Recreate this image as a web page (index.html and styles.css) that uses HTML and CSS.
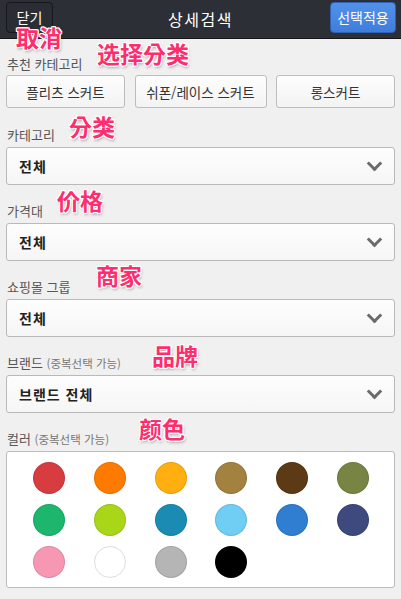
FILE: index.html
```html
<!DOCTYPE html>
<html lang="ko">
<head>
  <meta charset="UTF-8">
  <title>상세검색</title>
  <link rel="stylesheet" href="styles.css">
</head>
<body>

  <header class="topbar">
    <button class="btn-close">닫기</button>
    <h1>상세검색</h1>
    <button class="btn-apply">선택적용</button>
  </header>

  <main class="filters">
    <div class="label first">추천 카테고리</div>
    <div class="quick">
      <button>플리츠 스커트</button>
      <button>쉬폰/레이스 스커트</button>
      <button>롱스커트</button>
    </div>

    <div class="label">카테고리</div>
    <div class="select">전체<span class="chev"></span></div>

    <div class="label">가격대</div>
    <div class="select">전체<span class="chev"></span></div>

    <div class="label">쇼핑몰 그룹</div>
    <div class="select">전체<span class="chev"></span></div>

    <div class="label">브랜드 <small>(중복선택 가능)</small></div>
    <div class="select">브랜드 전체<span class="chev"></span></div>

    <div class="label">컬러 <small>(중복선택 가능)</small></div>
    <div class="colors">
      <span class="dot" style="background:#d63c40"></span>
      <span class="dot" style="background:#ff7b00"></span>
      <span class="dot" style="background:#ffb010"></span>
      <span class="dot" style="background:#a38240"></span>
      <span class="dot" style="background:#5b3a15"></span>
      <span class="dot" style="background:#788443"></span>
      <span class="dot" style="background:#1db66d"></span>
      <span class="dot" style="background:#a9d619"></span>
      <span class="dot" style="background:#1a8cb4"></span>
      <span class="dot" style="background:#70cdf3"></span>
      <span class="dot" style="background:#2f7ed1"></span>
      <span class="dot" style="background:#3e4a7e"></span>
      <span class="dot" style="background:#f797b3"></span>
      <span class="dot white" style="background:#fff"></span>
      <span class="dot" style="background:#b5b5b5"></span>
      <span class="dot" style="background:#000"></span>
    </div>
  </main>

  <!-- 주석 라벨 -->
  <span class="note" style="left:16px;top:25px">取消</span>
  <span class="note" style="left:97px;top:41px">选择分类</span>
  <span class="note" style="left:69px;top:114px">分类</span>
  <span class="note" style="left:57px;top:188px">价格</span>
  <span class="note" style="left:96px;top:263px">商家</span>
  <span class="note" style="left:152px;top:343px">品牌</span>
  <span class="note" style="left:139px;top:416px">颜色</span>

</body>
</html>
```

FILE: styles.css
```css
body {
  margin: 0;
  width: 401px;
  height: 599px;
  background: #f0f0f0;
  font-family: "Noto Sans CJK KR", "Noto Sans", sans-serif;
  position: relative;
  overflow: hidden;
}

.topbar {
  height: 38px;
  background: #2d2f37;
  border-bottom: 1px solid #15161a;
  display: flex;
  align-items: center;
  justify-content: space-between;
  padding: 0 5px 0 6px;
  position: relative;
}

.topbar h1 {
  position: absolute;
  left: 0;
  right: 0;
  text-align: center;
  margin: 0;
  font-size: 16px;
  letter-spacing: 1.5px;
  font-weight: normal;
  color: #fff;
  pointer-events: none;
}

.topbar button {
  height: 31px;
  margin-top: -4px;
  border-radius: 4px;
  font-family: inherit;
  font-size: 14px;
  color: #fff;
  padding: 0;
}

.btn-close {
  width: 47px;
  background: #2b2d35;
  border: 1px solid #17181c;
}

.btn-apply {
  width: 66px;
  background: linear-gradient(#5292ea, #3f7ddb);
  border: 1px solid #2f62b6;
}

.filters {
  padding: 0 6px;
}

.label {
  height: 16px;
  line-height: 16px;
  font-size: 13px;
  color: #555;
  margin: 18px 0 4px 1px;
}

.label.first {
  margin-top: 17px;
  margin-bottom: 3px;
}

.label small {
  font-size: 11.5px;
  color: #777;
}

.quick {
  display: flex;
  justify-content: space-between;
  margin-bottom: 19px;
}

.quick button {
  height: 33px;
  background: linear-gradient(#fdfdfd, #f3f3f3);
  border: 1px solid #bdbdbd;
  border-radius: 3px;
  font-family: inherit;
  font-size: 13.5px;
  color: #333;
  padding: 0;
}

.quick button:nth-child(1) { width: 119px; }
.quick button:nth-child(2) { width: 132px; }
.quick button:nth-child(3) { width: 119px; }

.select {
  height: 38px;
  box-sizing: border-box;
  border: 1px solid #b9b9b9;
  border-radius: 3px;
  background: linear-gradient(#fdfdfd, #f6f6f6);
  display: flex;
  align-items: center;
  justify-content: space-between;
  padding: 0 14px 0 12px;
  font-size: 14px;
  letter-spacing: 1px;
  font-weight: bold;
  color: #222;
}

.chev {
  width: 8px;
  height: 8px;
  border-right: 3px solid #6b6b6b;
  border-bottom: 3px solid #6b6b6b;
  transform: rotate(45deg);
  margin-top: -6px;
}

.colors {
  height: 137px;
  box-sizing: border-box;
  border: 1px solid #bbb;
  border-radius: 3px;
  background: #fff;
  display: grid;
  grid-template-columns: repeat(6, 1fr);
  grid-auto-rows: 32px;
  row-gap: 10px;
  padding: 10px 11px 0 12px;
  justify-items: center;
}

.dot {
  width: 32px;
  height: 32px;
  border-radius: 50%;
  box-sizing: border-box;
  border: 1px solid rgba(0, 0, 0, 0.1);
}

.dot.white {
  border: 1px solid #ddd;
}

.note {
  position: absolute;
  font-family: "Noto Sans CJK SC", sans-serif;
  font-size: 23px;
  line-height: 24px;
  font-weight: bold;
  color: #ff2c6e;
  text-shadow:
    -1px -1px 0 #fff, 1px -1px 0 #fff, -1px 1px 0 #fff, 1px 1px 0 #fff,
    0 -1px 0 #fff, 0 1px 0 #fff, -1px 0 0 #fff, 1px 0 0 #fff,
    1px 2px 3px rgba(0, 0, 0, 0.35);
}
```
